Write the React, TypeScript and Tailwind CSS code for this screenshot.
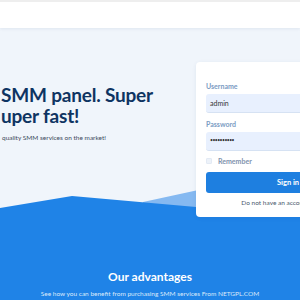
import React from "react";

const font = { fontFamily: "Lato, 'Open Sans', sans-serif" };

const Header = () => (
  <header className="h-[28px] bg-white border-t-2 border-[#eeeeee] shadow-[0_1px_3px_rgba(30,60,110,0.08)] relative z-20" />
);

const LoginCard = () => (
  <div className="relative z-10 mt-[34px] w-[184px] h-[155px] shrink-0 bg-white rounded-[4px] shadow-[0_1px_4px_rgba(30,60,110,0.08)] px-[10px] pt-[20px]">
    <label className="block text-[7px] font-bold text-[#7b9cc3] leading-[9px]">Username</label>
    <div className="mt-[3px] h-[19px] rounded-[3px] bg-[#e8f0fe] border-b border-[#d6e2f3] flex items-center px-[4px] text-[7px] text-[#333]">
      admin
    </div>
    <label className="block mt-[7px] text-[7px] font-bold text-[#7b9cc3] leading-[9px]">Password</label>
    <div className="mt-[3px] h-[19px] rounded-[3px] bg-[#e8f0fe] border-b border-[#d6e2f3] flex items-center px-[4px] text-[5px] tracking-[-0.5px] text-[#333]">
      ••••••••••
    </div>
    <div className="mt-[5px] flex items-center gap-[6px]">
      <span className="w-[6px] h-[6px] rounded-[1px] bg-[#edf2f9] border border-[#e3eaf4]" />
      <span className="text-[7px] font-bold text-[#7f93ad]">Remember</span>
    </div>
    <button className="mt-[5px] w-full h-[21px] rounded-[3px] bg-[#1e7fe0] text-white text-[7.5px] font-bold">
      Sign in
    </button>
    <p className="mt-[5px] text-center text-[6.5px] text-[#4a5a6e] whitespace-nowrap">
      Do not have an account? Sign up
    </p>
  </div>
);

const Wave = () => (
  <svg
    className="absolute left-0 bottom-0 w-[300px] h-[50px]"
    viewBox="0 0 300 50"
    preserveAspectRatio="none"
  >
    <polygon points="143,42 300,8 300,50 143,50" fill="#85b9f1" />
    <polygon points="0,48 72,36 196,47 300,56 300,50 0,50" fill="#1f83e7" />
  </svg>
);

export default function App() {
  return (
    <div className="w-[300px] h-[300px] overflow-hidden bg-[#1f83e7]" style={font}>
      <Header />
      <section className="relative h-[182px] bg-[#f0f5fb] flex">
        <Wave />
        <div className="relative z-10 pt-[56px] pl-[1px] shrink-0 w-[196px]">
          <h1 className="text-[19px] font-bold leading-[21px] tracking-[-0.2px] text-[#0e3462] whitespace-nowrap">
            SMM panel. Super
            <br />
            uper fast!
          </h1>
          <p className="mt-[7px] pl-[1px] text-[6.5px] text-[#3d4b5c] whitespace-nowrap">
            quality SMM services on the market!
          </p>
        </div>
        <LoginCard />
      </section>
      <section className="pt-[59px] text-center text-white">
        <h2 className="text-[12px] font-bold leading-[15px]">Our advantages</h2>
        <p className="mt-[5px] text-[6.5px] text-[#dbe9fa] whitespace-nowrap">
          See how you can benefit from purchasing SMM services From NETGPL.COM
        </p>
      </section>
    </div>
  );
}
